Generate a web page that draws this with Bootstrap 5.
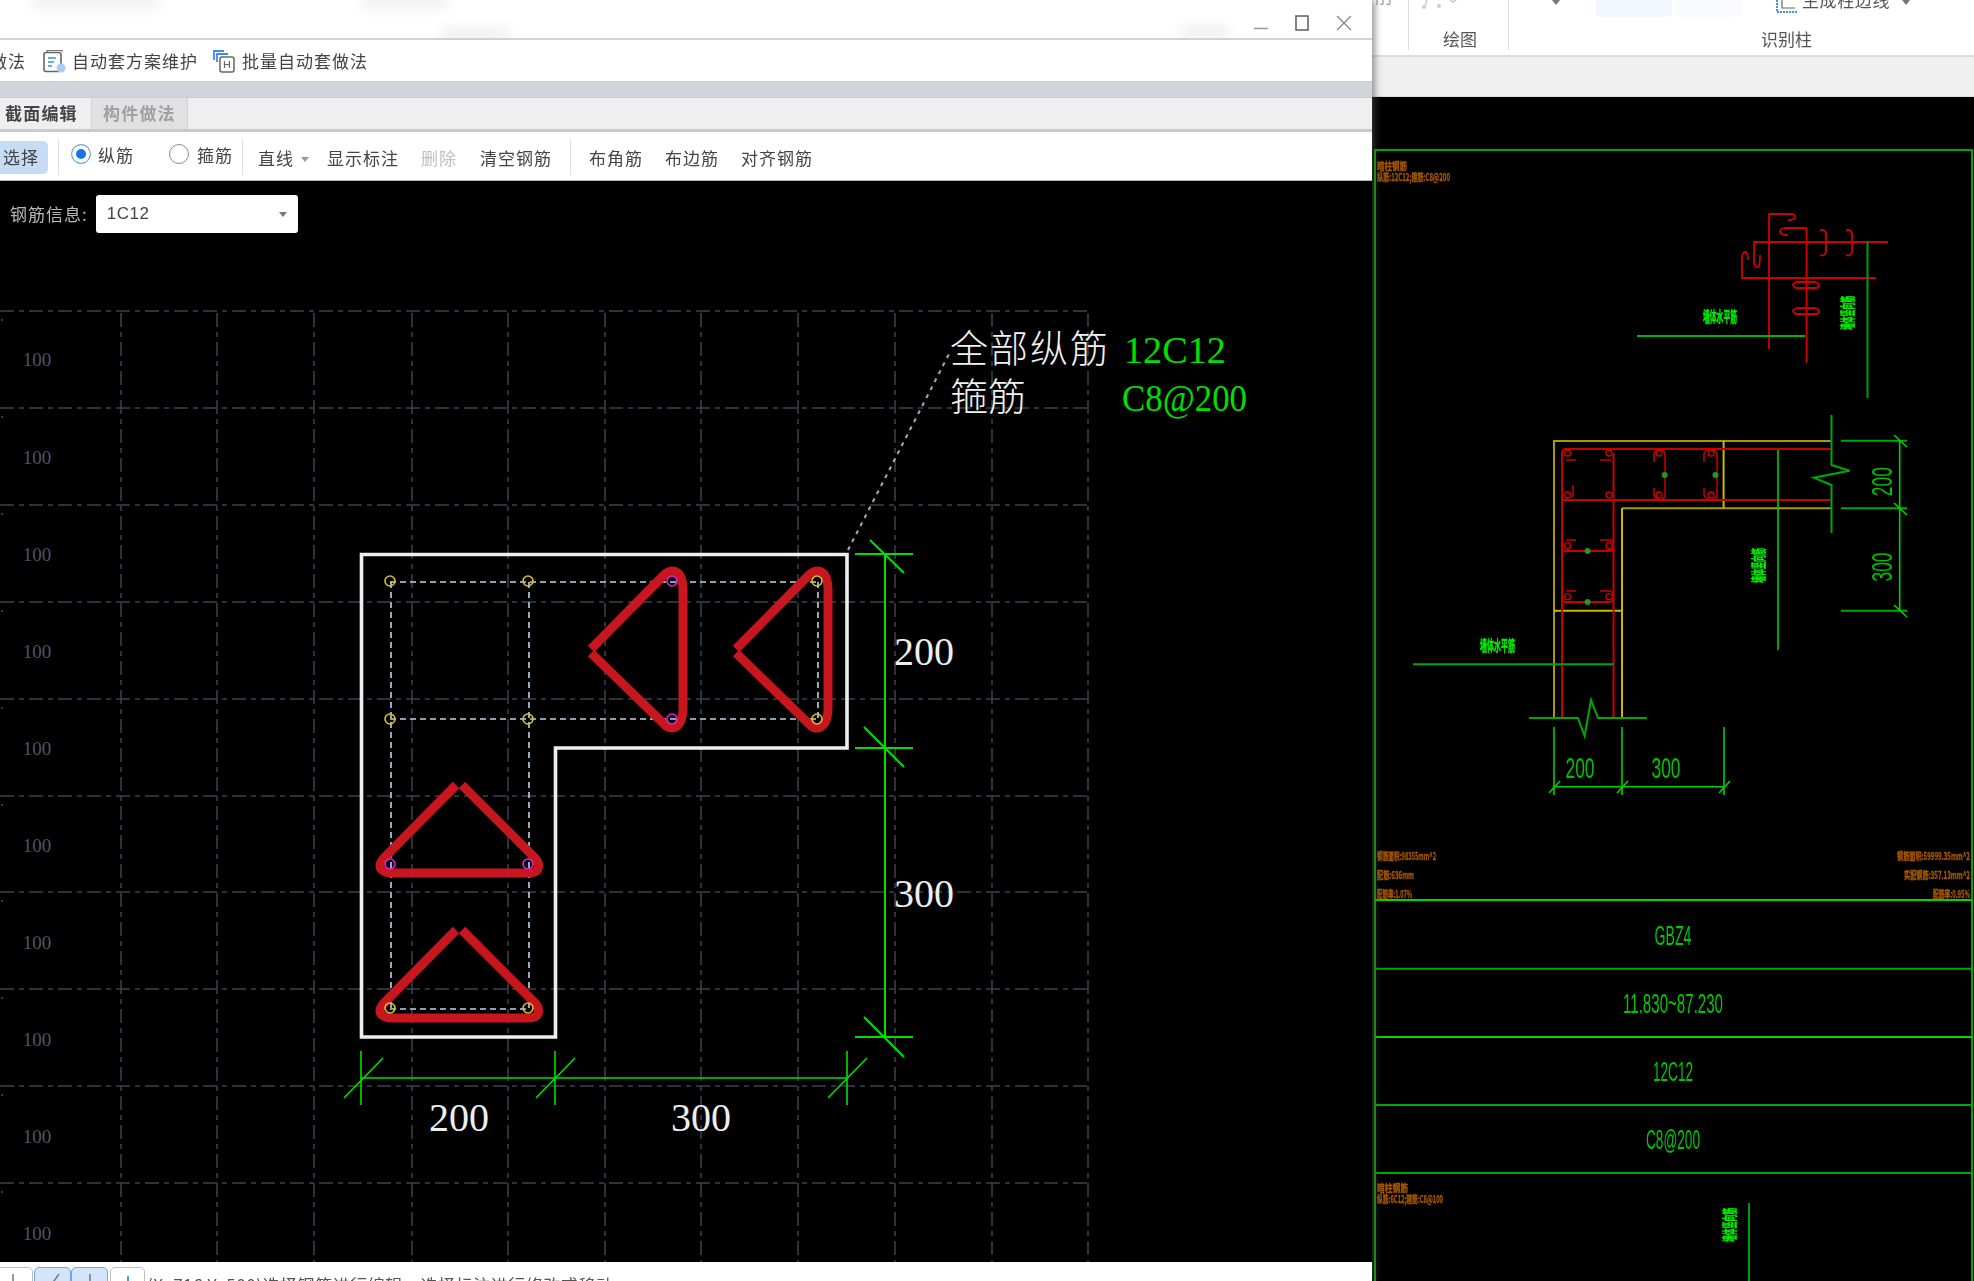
<!DOCTYPE html>
<html lang="zh-CN">
<head>
<meta charset="utf-8">
<title>截面编辑</title>
<link href="https://cdn.jsdelivr.net/npm/bootstrap@5.3.0/dist/css/bootstrap.min.css" rel="stylesheet">
<style>
html,body{height:1281px;overflow:hidden;margin:0;background:#000}
body{font-family:"Noto Sans CJK SC","Liberation Sans",sans-serif;color:#444}
.shell{width:1974px;height:1281px}
.win{width:1372px;height:1281px;box-shadow:3px 0 7px rgba(80,80,80,.6);z-index:2;position:relative;flex:none}
.soft{filter:blur(.45px)}
.tbar{height:38px;background:#fff;padding:8px 20px 0 0;gap:27px}
.smudge{position:absolute;height:12px;background:#eee;filter:blur(6px);border-radius:8px}
.tools{height:44px;background:#fff;border-top:2px solid #cfd2d6;border-bottom:1px solid #c9ccd1;font-size:17px;letter-spacing:1px;margin-left:-10px;gap:8px;padding-top:1px}
.tool-i{margin-right:-2px}
.tool-gap{width:-1px;margin-left:6px}
.strip{height:15px;background:#d2d4d9}
.tabs{height:35px;background:#efefef;border-top:1px solid #c8cad0;border-bottom:3px solid #c8cad0;font-size:17px;font-weight:700;letter-spacing:1.2px}
.tabi{padding:0 12px 0 5px;height:31px;line-height:30px;color:#444;width:91px;white-space:nowrap}
.tabo{width:97px;background:#e1e1e1;color:#a0a0a0;border:solid #d2d2d2;border-width:0 1px;padding-left:11px;height:31px;line-height:30px;white-space:nowrap}
.edit{height:49px;background:#fff;border-bottom:1px solid #b9b9b9;font-size:17px;letter-spacing:1px;position:relative}
.edit>*{position:absolute;white-space:nowrap;line-height:24px;top:14px}
.pick{left:0;top:9px!important;width:48px;height:33px;background:#c6dcf5;border-radius:0 5px 5px 0;padding:4px 0 0 3px}
.vsep{width:1px;height:36px;background:#dfdfdf;top:7px!important}
.rad{width:20px;height:20px;border-radius:50%;border:1px solid #8c8c8c;background:#fff;top:12px!important}
.rad.on{border-color:#7fa8da;box-shadow:inset 0 0 0 4px #fff;background:#1677e5}
.caret-s{width:0;height:0;border:4px solid transparent;border-top:5px solid #999;border-bottom:0;top:25px!important}
.dim{color:#c0c0c0}
.stage{height:1081px;background:#000;overflow:hidden}
.stage svg{position:absolute;left:0;top:0}
.inforow{position:relative;z-index:1;padding:14px 0 0 10px;gap:8px;color:#b9b9b9;font-size:17px;letter-spacing:1px}
.selbox{width:202px;height:38px;background:#fff;border-radius:3px;color:#444;font-size:17px;padding:0 11px;letter-spacing:.5px;font-family:"Liberation Sans",sans-serif}
.selcaret{width:0;height:0;border:4px solid transparent;border-top:5px solid #777;border-bottom:0}
.status{height:19px;background:#fff;font-size:17px;position:relative;overflow:hidden}
.sbtn{position:absolute;top:5px;height:24px;border:1px solid #bdbdbd;border-radius:5px;background:#fff;display:flex;justify-content:center}
.sbtn.act{background:#d3e4fb;border-color:#6fa8ea}
.sbtn svg{margin-top:6px}
.stext{position:absolute;left:147px;top:11px;white-space:nowrap;line-height:24px;letter-spacing:.55px;color:#555}
.rside{width:602px;height:1281px;flex:none}
.ribbon{height:57px;background:#fff;border-bottom:2px solid #dcdcdc;position:relative;overflow:hidden;font-size:17px;color:#555}
.ribbon>*{position:absolute}
.hl{top:0;height:17px;border-radius:0 0 5px 5px}
.rsep{width:1px;height:50px;top:0;background:#dedede}
.rlab{top:26px;line-height:26px}
.gstrip{height:40px;background:#f0f0f0;border-bottom:1px solid #dcdcdc}
.cad{height:1184px;background:#000}
.dwg text{font-family:"Liberation Serif","Noto Sans CJK SC",serif}
.dwg .cn{font-family:"Noto Sans CJK SC",sans-serif}
.dwg .cadt{font-family:"Liberation Sans",sans-serif}
.orange text{stroke:#a85800;stroke-width:.35px}
.glabel text{stroke:#00f000;stroke-width:.5px}
</style>
</head>
<body>
<div class="shell d-flex">
  <section class="win d-flex flex-column">
    <header class="tbar d-flex align-items-center justify-content-end position-relative">
      <span class="smudge" style="left:30px;width:130px;top:-4px"></span>
      <span class="smudge" style="left:360px;width:90px;top:-4px"></span>
      <span class="smudge" style="left:440px;width:70px;top:28px"></span>
      <span class="smudge" style="left:1180px;width:50px;top:26px"></span>
      <svg width="14" height="14" viewBox="0 0 14 14"><path d="M0 12.500H14" stroke="#999" stroke-width="1.500"/></svg>
      <svg width="14" height="16" viewBox="0 0 14 16"><rect x="1" y="1" width="12" height="14" fill="none" stroke="#666" stroke-width="1.600"/></svg>
      <svg width="16" height="16" viewBox="0 0 16 16"><path d="M1 1L15 15M15 1L1 15" stroke="#888" stroke-width="1.400"/></svg>
    </header>
    <div class="tools d-flex align-items-center soft">
      <span class="me-2">做法</span>
      <svg class="tool-i" width="24" height="24" viewBox="0 0 24 24" fill="none"><path d="M5 3V1.500H20V3" stroke="#777" stroke-width="1.200"/><rect x="2" y="3.500" width="17" height="19" rx="2" stroke="#666" stroke-width="1.600"/><path d="M6 9H14M6 13H12M6 17H10" stroke="#3b8de8" stroke-width="1.600"/><circle cx="19" cy="19" r="4.500" fill="#a8cdf5"/></svg>
      <span>自动套方案维护</span>
      <svg class="tool-i tool-gap" width="24" height="24" viewBox="0 0 24 24" fill="none"><path d="M2 11V2H12" stroke="#3b8de8" stroke-width="1.800"/><path d="M5 13V5H16" stroke="#3b8de8" stroke-width="1.800"/><rect x="8" y="8" width="14" height="15" rx="2" stroke="#666" stroke-width="1.500"/><path d="M12.500 12V19M17.500 12V19M12.500 15.500H17.500" stroke="#666" stroke-width="1.200"/></svg>
      <span>批量自动套做法</span>
    </div>
    <div class="strip"></div>
    <div class="tabs d-flex soft">
      <div class="tabi">截面编辑</div>
      <div class="tabo">构件做法</div>
    </div>
    <div class="edit soft">
      <span class="pick">选择</span>
      <span class="vsep" style="left:58px"></span>
      <span class="rad on" style="left:71px"></span><span style="left:98px;top:11px">纵筋</span>
      <span class="rad" style="left:169px"></span><span style="left:197px;top:11px">箍筋</span>
      <span class="vsep" style="left:242px"></span>
      <span style="left:258px">直线</span><span class="caret-s" style="left:301px"></span>
      <span style="left:327px">显示标注</span>
      <span class="dim" style="left:421px">删除</span>
      <span style="left:480px">清空钢筋</span>
      <span class="vsep" style="left:570px"></span>
      <span style="left:589px">布角筋</span>
      <span style="left:665px">布边筋</span>
      <span style="left:741px">对齐钢筋</span>
    </div>
    <div class="stage position-relative">
      <svg class="dwg" width="1372" height="1081" viewBox="0 181 1372 1081" fill="none">
        <g stroke="#3a4350" stroke-width="1.500" stroke-dasharray="14 5 5 5">
          <path d="M0 311H1088M0 408H1088M0 505H1088M0 602H1088M0 699H1088M0 796H1088M0 892H1088M0 989H1088M0 1086H1088M0 1183H1088"/>
          <path d="M121 313V1262M217 313V1262M314 313V1262M412 313V1262M508 313V1262M605 313V1262M701 313V1262M798 313V1262M895 313V1262M992 313V1262M1088 313V1262"/>
        </g>
        <path d="M2 319V321M2 416V418M2 513V515M2 610V612M2 707V709M2 804V806M2 900V902M2 997V999M2 1094V1096M2 1191V1193" stroke="#3f4856" stroke-width="1.600"/>
        <g fill="#4d5664" font-size="19" text-anchor="middle">
          <text x="37" y="366">100</text><text x="37" y="464">100</text><text x="37" y="561">100</text><text x="37" y="658">100</text><text x="37" y="755">100</text><text x="37" y="852">100</text><text x="37" y="949">100</text><text x="37" y="1046">100</text><text x="37" y="1143">100</text><text x="37" y="1240">100</text>
        </g>
        <path d="M361.500 554.500H847V748H555.500V1037H361.500Z" stroke="#eee" stroke-width="3.600"/>
        <path d="M848 550L950 352" stroke="#aaa" stroke-width="2" stroke-dasharray="4 5"/>
        <path d="M390 582H817M390 719H817M390 1009H528M391 582V1009M529 582V1009M818 582V719" stroke="#bcd4ec" stroke-width="1.600" stroke-dasharray="6 4"/>
        <g stroke="#c8161e" stroke-width="9" stroke-linejoin="round">
          <path d="M591 649L663 576Q672 567 679 574Q683 579 683 590V708Q683 720 678 725Q671 732 663 723L591 653"/>
          <path transform="translate(145 0)" d="M591 649L663 576Q672 567 679 574Q683 579 683 590V708Q683 720 678 725Q671 732 663 723L591 653"/>
          <path d="M456 785L384 858Q378 865 381 869Q384 873 392 873H528Q536 873 538 869Q540 864 535 858L462 785"/>
          <path transform="translate(0 145)" d="M456 785L384 858Q378 865 381 869Q384 873 392 873H528Q536 873 538 869Q540 864 535 858L462 785"/>
        </g>
        <g stroke="#d9c21a" stroke-width="1.600">
          <circle cx="390" cy="581" r="5"/><circle cx="528" cy="581" r="5"/><circle cx="817" cy="581" r="5"/><circle cx="390" cy="719" r="5"/><circle cx="528" cy="719" r="5"/><circle cx="817" cy="719" r="5"/><circle cx="390" cy="1008" r="5"/><circle cx="528" cy="1008" r="5"/>
        </g>
        <g stroke="#e020e0" stroke-width="1.600">
          <circle cx="672" cy="581" r="5"/><circle cx="672" cy="719" r="5"/><circle cx="390" cy="864" r="5"/><circle cx="528" cy="864" r="5"/>
        </g>
        <g stroke="#00e000" stroke-width="2">
          <path d="M885 554V1037M855 554H913M855 748H913M855 1037H913M870 540L904 573M864 727L904 767M864 1017L904 1057"/>
          <path d="M361 1078H847M361 1051V1105M555 1051V1105M847 1051V1105M344 1098L383 1058M536 1098L575 1058M828 1098L867 1058" stroke-width="1.600"/>
        </g>
        <g fill="#eee" font-size="40" text-anchor="middle">
          <text x="459" y="1131">200</text><text x="701" y="1131">300</text>
          <text x="924" y="665">200</text><text x="924" y="907">300</text>
        </g>
        <g fill="#f2f2f2" font-size="38" font-weight="300">
          <text class="cn" x="950" y="362" textLength="158" lengthAdjust="spacing">全部纵筋</text>
          <text class="cn" x="950" y="410" textLength="76" lengthAdjust="spacing">箍筋</text>
        </g>
        <g fill="#00e000" font-size="38">
          <text x="1124" y="363" textLength="102" lengthAdjust="spacingAndGlyphs">12C12</text>
          <text x="1122" y="411" textLength="125" lengthAdjust="spacingAndGlyphs">C8@200</text>
        </g>
      </svg>
      <div class="inforow d-flex align-items-center soft">
        <span>钢筋信息:</span>
        <div class="selbox d-flex align-items-center justify-content-between"><span>1C12</span><span class="selcaret"></span></div>
      </div>
    </div>
    <footer class="status">
      <span class="sbtn" style="left:-8px;width:41px"><svg width="14" height="14" viewBox="0 0 14 14"><path d="M7 0V14" stroke="#777" stroke-width="1.500"/></svg></span>
      <span class="sbtn act" style="left:34px;width:37px"><svg width="14" height="14" viewBox="0 0 14 14"><path d="M13 0L3 14" stroke="#777" stroke-width="1.500"/></svg></span>
      <span class="sbtn act" style="left:71px;width:37px"><svg width="14" height="14" viewBox="0 0 14 14"><path d="M7 0V14" stroke="#777" stroke-width="1.500"/></svg></span>
      <span class="sbtn" style="left:110px;width:35px"><svg width="16" height="14" viewBox="0 0 16 14"><path d="M8 2V14M1 10H15" stroke="#3b8de8" stroke-width="1.800"/></svg></span>
      <span class="stext soft">(X: 716 Y: 580)选择钢筋进行编辑，选择标注进行修改或移动</span>
    </footer>
  </section>
  <aside class="rside d-flex flex-column">
    <div class="ribbon">
      <span class="hl" style="left:224px;width:76px;background:#f0f7ff"></span>
      <span class="hl" style="left:303px;width:67px;background:#f8fbff"></span>
      <span class="rsep" style="left:36px"></span>
      <span class="rsep" style="left:136px"></span>
      <span class="soft" style="left:3px;top:-17px;color:#999">削</span>
      <span class="rlab soft" style="left:71px">绘图</span>
      <span class="rlab soft" style="left:389px">识别柱</span>
      <span class="soft" style="left:430px;top:-13px;letter-spacing:.6px">生成柱边线</span>
      <svg style="left:403px;top:0" width="24" height="14" viewBox="0 0 24 14" fill="none"><path d="M2 0V12H22" stroke="#4a90e2" stroke-width="2" stroke-dasharray="2 1"/><path d="M7 0V8H20" stroke="#666" stroke-width="1.200"/></svg>
      <span style="left:180px;top:0;width:0;height:0;border:4px solid transparent;border-top:5px solid #777;border-bottom:0"></span>
      <span style="left:530px;top:0;width:0;height:0;border:4px solid transparent;border-top:5px solid #777;border-bottom:0"></span>
      <svg style="left:46px;top:0" width="40" height="12" viewBox="0 0 40 12" fill="none"><path d="M9 0L7 6" stroke="#cdcdcd" stroke-width="1.600"/><circle cx="6" cy="7" r="2" fill="#cdcdcd"/><circle cx="21" cy="6" r="2" fill="#cdcdcd"/><path d="M32 0L35 2L38 0" stroke="#cdcdcd" stroke-width="1.600"/></svg>
    </div>
    <div class="gstrip"></div>
    <div class="cad">
      <svg class="dwg soft d-block" width="602" height="1184" viewBox="1372 97 602 1184" fill="none">
        <path d="M1375 1281V150H1972V1281" stroke="#00a800" stroke-width="2"/>
        <g stroke-width="2">
          <path d="M1375 900H1972M1375 1037H1972" stroke="#00d800"/>
          <path d="M1375 968.700H1972M1375 1105H1972M1375 1173H1972" stroke="#00a800"/>
        </g>
        <g fill="#00c800" font-size="27" text-anchor="middle">
          <text class="cadt" x="1673" y="945" textLength="37" lengthAdjust="spacingAndGlyphs">GBZ4</text>
          <text class="cadt" x="1673" y="1013" textLength="100" lengthAdjust="spacingAndGlyphs">11.830~87.230</text>
          <text class="cadt" x="1673" y="1081" textLength="40" lengthAdjust="spacingAndGlyphs">12C12</text>
          <text class="cadt" x="1673" y="1149" textLength="54" lengthAdjust="spacingAndGlyphs">C8@200</text>
        </g>
        <g class="orange" fill="#a85800" font-size="10.500" font-weight="700">
          <text class="cn" x="1377" y="170" textLength="30" lengthAdjust="spacingAndGlyphs">暗柱钢筋</text>
          <text class="cn" x="1377" y="181" textLength="73" lengthAdjust="spacingAndGlyphs">纵筋:12C12;箍筋:C8@200</text>
          <text class="cn" x="1377" y="860" textLength="59" lengthAdjust="spacingAndGlyphs">钢筋面积:98355mm^2</text>
          <text class="cn" x="1377" y="879" textLength="37" lengthAdjust="spacingAndGlyphs">配筋:636mm</text>
          <text class="cn" x="1377" y="898" textLength="35" lengthAdjust="spacingAndGlyphs">配筋率:1.07%</text>
          <text class="cn" x="1897" y="860" textLength="73" lengthAdjust="spacingAndGlyphs">钢筋面积:59999.35mm^2</text>
          <text class="cn" x="1904" y="879" textLength="66" lengthAdjust="spacingAndGlyphs">实配钢筋:357.13mm^2</text>
          <text class="cn" x="1933" y="898" textLength="37" lengthAdjust="spacingAndGlyphs">配筋率:0.95%</text>
          <text class="cn" x="1377" y="1192" textLength="31" lengthAdjust="spacingAndGlyphs">暗柱钢筋</text>
          <text class="cn" x="1377" y="1203" textLength="66" lengthAdjust="spacingAndGlyphs">纵筋:6C12;箍筋:C8@100</text>
        </g>
        <g stroke="#d00000" stroke-width="1.800">
          <path d="M1769 349V214H1792Q1796 215 1795 218Q1794 220 1788 220"/>
          <path d="M1806.500 363V228H1784Q1780 229 1780 232Q1781 235 1788 235"/>
          <path d="M1888 242H1754V262Q1755 268 1758 267Q1760 266 1760 255"/>
          <path d="M1876 278H1742V256Q1743 252 1746 252Q1748 254 1748 260"/>
          <path d="M1820 230Q1825 229 1826 233V252Q1824 257 1820 255"/>
          <path d="M1846 230Q1851 229 1852 233V252Q1850 257 1846 255"/>
          <path d="M1815 282H1797Q1793 283 1793 285Q1794 288 1797 288H1816Q1819 288 1819 285Q1819 283 1815 282"/>
          <path d="M1815 308H1797Q1793 309 1793 311Q1794 314 1797 314H1816Q1819 314 1819 311Q1819 309 1815 308"/>
        </g>
        <path d="M1867.500 242V398" stroke="#00a000" stroke-width="2"/>
        <path d="M1637 336H1805" stroke="#00b800" stroke-width="2"/>
        <g class="glabel" fill="#00f000" font-size="15" font-weight="700">
          <text class="cn" x="1703" y="322" textLength="34" lengthAdjust="spacingAndGlyphs">墙体水平筋</text>
          <text class="cn" x="1480" y="651" textLength="35" lengthAdjust="spacingAndGlyphs">墙体水平筋</text>
          <text class="cn" transform="translate(1853 330) rotate(-90)" textLength="34" lengthAdjust="spacingAndGlyphs">墙体竖向筋</text>
          <text class="cn" transform="translate(1764 583) rotate(-90)" textLength="35" lengthAdjust="spacingAndGlyphs">墙体竖向筋</text>
          <text class="cn" transform="translate(1735 1242) rotate(-90)" textLength="34" lengthAdjust="spacingAndGlyphs">墙体竖向筋</text>
        </g>
        <path d="M1749 1203V1281" stroke="#00d000" stroke-width="1.500"/>
        <g stroke="#a89a00" stroke-width="2">
          <path d="M1831.500 441H1554V718"/><path d="M1831.500 508.300H1622"/>
        </g>
        <g stroke="#c8b800" stroke-width="2">
          <path d="M1622 508.300V718M1723.600 441V508M1554 610.700H1622"/>
        </g>
        <g stroke="#c80000" stroke-width="2">
          <path d="M1831.500 449H1566Q1562 449 1562 453V718"/>
          <path d="M1831.500 500H1562"/>
          <path d="M1613.500 453V718"/>
          <path d="M1562 547V548Q1563 552 1567 551H1609Q1613 551 1613.500 547"/>
          <path d="M1562 598V599Q1563 603 1567 602H1609Q1613 602 1613.500 598"/>
          <path d="M1566 540H1576M1600 540H1611Q1613 541 1613 544M1566 591H1576M1600 591H1611Q1613 592 1613 595" stroke-width="1.500"/>
          <path d="M1654 462V453Q1656 449 1661 449Q1665 451 1665 455V495Q1664 500 1659 500Q1654 498 1654 494V488" stroke-width="1.500"/>
          <path d="M1704 462V453Q1706 449 1711 449Q1717 451 1717 455V495Q1716 500 1711 500Q1704 498 1704 494V488" stroke-width="1.500"/>
          <path d="M1566 460H1576M1600 460H1611M1573 485V497" stroke-width="1.500"/>
        </g>
        <g stroke="#d00000" stroke-width="1.300">
          <circle cx="1567.600" cy="453" r="3"/><circle cx="1609" cy="453" r="3"/><circle cx="1567.600" cy="495" r="3"/><circle cx="1609" cy="495" r="3"/>
          <circle cx="1659" cy="453" r="3"/><circle cx="1711" cy="453" r="3"/><circle cx="1659" cy="495" r="3"/><circle cx="1711" cy="495" r="3"/>
          <circle cx="1567.600" cy="545.700" r="3"/><circle cx="1609" cy="545.700" r="3"/><circle cx="1567.600" cy="596.700" r="3"/><circle cx="1609" cy="596.700" r="3"/>
        </g>
        <g fill="#1f9a1f">
          <circle cx="1664.700" cy="475" r="3"/><circle cx="1715.500" cy="475" r="3"/><circle cx="1587.600" cy="551" r="3"/><circle cx="1587.600" cy="602" r="3"/>
        </g>
        <g stroke="#00a800" stroke-width="2">
          <path d="M1831.500 415V465L1849.600 470.700L1813.700 477.700L1831.500 485V533"/>
          <path d="M1529 718H1578L1584.600 736L1591 700L1598 718H1647"/>
          <path d="M1841 440.700H1907M1841 508.300H1907M1841 610.700H1907"/>
        </g>
        <g stroke="#00d000" stroke-width="1.600">
          <path d="M1778 450V650"/>
          <path d="M1899.700 441V611M1894 435L1907 447M1894 503L1907 515M1894 605L1907 617"/>
          <path d="M1554 727V795M1622 727V795M1724 727V795"/>
          <path d="M1554 786.700H1724M1549 793L1560 781M1617 793L1628 781M1719 793L1730 781"/>
        </g>
        <path d="M1413 664.300H1613.500" stroke="#00a800" stroke-width="2"/>
        <g fill="#00c000" font-size="30" text-anchor="middle">
          <text class="cadt" x="1580" y="778" textLength="29" lengthAdjust="spacingAndGlyphs">200</text>
          <text class="cadt" x="1666" y="778" textLength="29" lengthAdjust="spacingAndGlyphs">300</text>
          <text class="cadt" transform="translate(1892 481.700) rotate(-90)" textLength="29" lengthAdjust="spacingAndGlyphs">200</text>
          <text class="cadt" transform="translate(1892 567) rotate(-90)" textLength="29" lengthAdjust="spacingAndGlyphs">300</text>
        </g>
      </svg>
    </div>
  </aside>
</div>
<script src="https://cdn.jsdelivr.net/npm/bootstrap@5.3.0/dist/js/bootstrap.bundle.min.js"></script>
</body>
</html>
